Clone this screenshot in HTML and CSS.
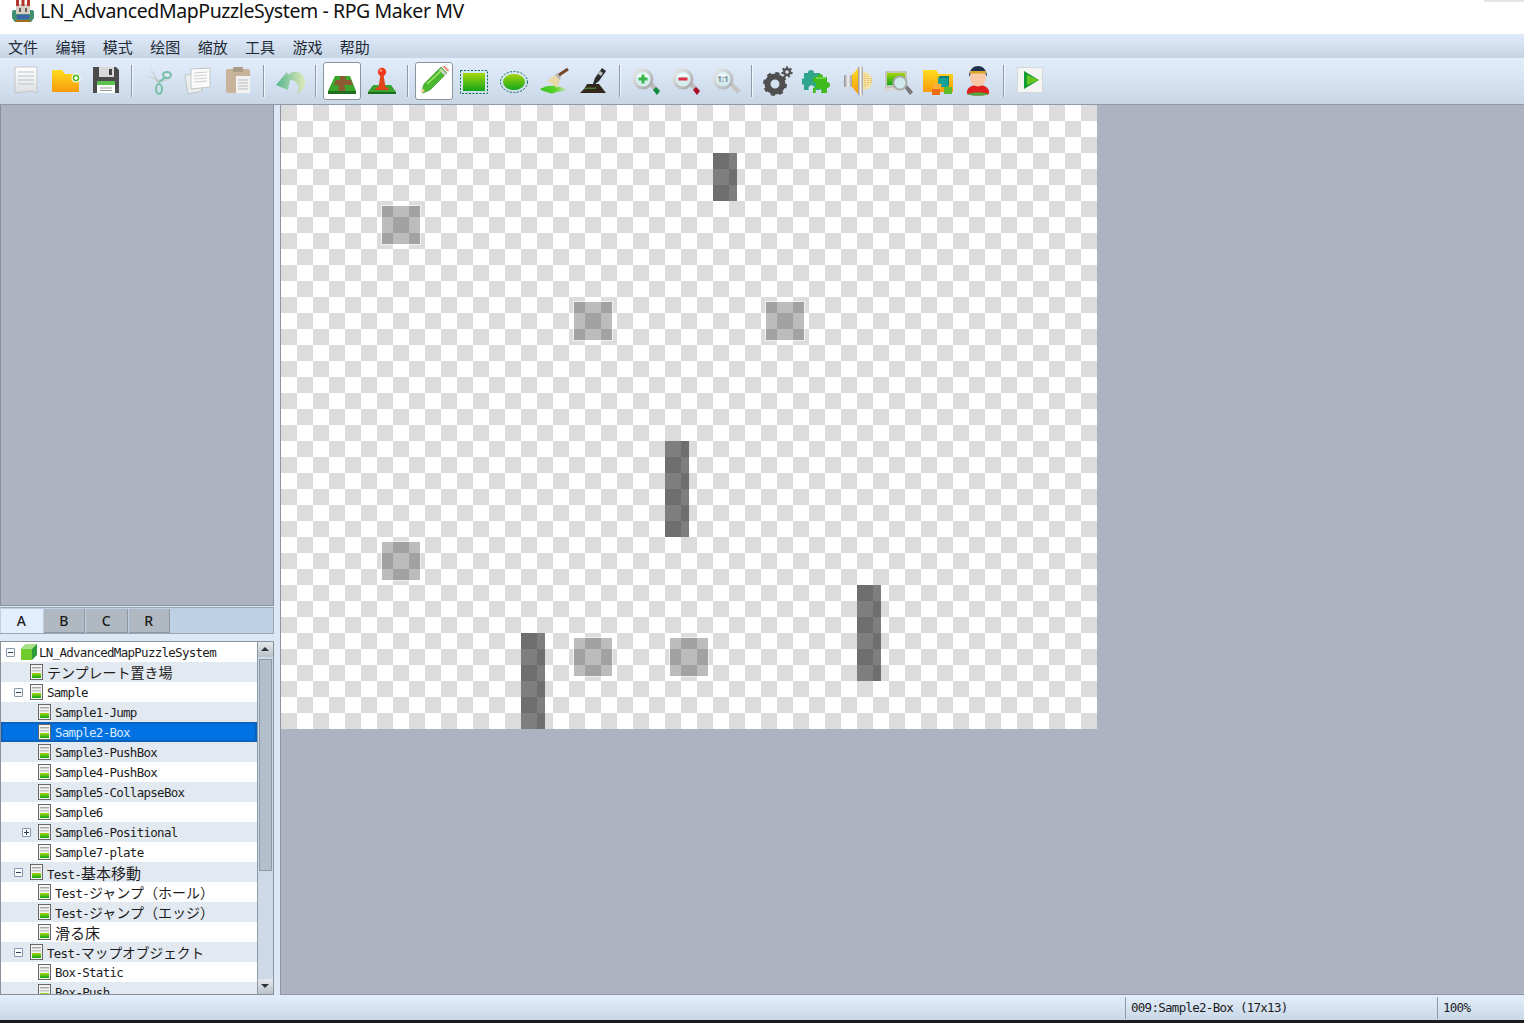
FILE: index.html
```html
<!DOCTYPE html>
<html lang="zh">
<head>
    <meta charset="UTF-8">
    <title>LN_AdvancedMapPuzzleSystem - RPG Maker MV</title>
    <link rel="stylesheet" href="styles.css">
</head>
<body>
    <svg class="defs" width="0" height="0">
        <defs>
            <linearGradient id="g-green" x1="0" y1="0" x2="0" y2="1"><stop offset="0" stop-color="#a6d60a"/><stop offset="1" stop-color="#11a61c"/></linearGradient>
            <linearGradient id="g-yellow" x1="0" y1="0" x2="0" y2="1"><stop offset="0" stop-color="#ffdc1e"/><stop offset="1" stop-color="#f79a0c"/></linearGradient>
            <linearGradient id="g-paper" x1="0" y1="0" x2="0" y2="1"><stop offset="0" stop-color="#ffffff"/><stop offset="1" stop-color="#dcdfe2"/></linearGradient>
            <linearGradient id="g-undo" x1="0" y1="0" x2="1" y2="0"><stop offset="0" stop-color="#55b58e"/><stop offset="1" stop-color="#dfe8b8"/></linearGradient>
            <linearGradient id="g-pool" x1="0" y1="0" x2="1" y2="0"><stop offset="0" stop-color="#35c11f"/><stop offset=".6" stop-color="#5fd42c"/><stop offset="1" stop-color="#d5e4d2"/></linearGradient>
            <linearGradient id="g-ring" x1="0" y1="0" x2="1" y2="1"><stop offset="0" stop-color="#eeeeee"/><stop offset="1" stop-color="#a2a2a2"/></linearGradient>
            <linearGradient id="g-silver" x1="0" y1="0" x2="1" y2="0"><stop offset="0" stop-color="#8d8d8d"/><stop offset=".5" stop-color="#f2f2f2"/><stop offset="1" stop-color="#9c9c9c"/></linearGradient>
            <symbol id="page" viewBox="0 0 13 16">
                <rect x=".5" y=".5" width="12" height="15" fill="#f4f4f4" stroke="#666"/>
                <rect x="2" y="3" width="9" height="1.5" fill="#a9a9a9"/>
                <rect x="2" y="6" width="9" height="1.5" fill="#c4c4c4"/>
                <rect x="2" y="9" width="9" height="5" fill="url(#g-green)"/>
            </symbol>
            <symbol id="lens" viewBox="0 0 32 32">
                <circle cx="13" cy="14" r="10.500" fill="url(#g-ring)"/>
                <circle cx="13" cy="14" r="7.500" fill="#d6eef0"/>
                <path d="M6.500 13a7 7 0 0 1 13 0c-3-2-10-2-13 0z" fill="#f8ffff"/>
            </symbol>
        </defs>
    </svg>

    <header class="titlebar">
        <svg class="app-icon" viewBox="0 0 22 22">
            <path d="M0 12q0-2 2-2h18q2 0 2 2v6l-3 4H3l-3-4z" fill="#3d9070"/>
            <rect x="4" y="4" width="14" height="10" fill="#d8cfc4"/>
            <path d="M4 0h3v6H4zM9.500 0h3v6h-3zM15 0h3v6h-3z" fill="#b5362c"/>
            <rect x="7" y="8" width="2" height="4" fill="#705a55"/>
            <rect x="13" y="8" width="2" height="4" fill="#705a55"/>
            <rect x="5" y="15" width="12" height="4" fill="#3f62b0"/>
            <path d="M3 20h16l-1 2H4z" fill="#a66a22"/>
        </svg>
        <span class="app-title">LN_AdvancedMapPuzzleSystem - RPG Maker MV</span>
        <span class="title-shadow"></span>
    </header>

    <nav class="menubar">
        <span>文件</span><span>编辑</span><span>模式</span><span>绘图</span><span>缩放</span><span>工具</span><span>游戏</span><span>帮助</span>
    </nav>

    <div class="toolbar">
        <button class="tool">
            <svg viewBox="0 0 32 32"><path d="M5 2h22v26l-5-2-17 2z" fill="url(#g-paper)" stroke="#c4c4c4"/><path d="M8 7h16M8 11h16M8 15h16M8 19h16" stroke="#bfc2c4"/></svg>
        </button>
        <button class="tool">
            <svg viewBox="0 0 32 32"><path d="M2 6q0-1 1-1h9l3 4h14v18H3q-1 0-1-1z" fill="url(#g-yellow)"/><circle cx="26" cy="13" r="4.500" fill="#fff"/><circle cx="26" cy="13" r="3.400" fill="#57b92c"/><path d="M24 13h4M26 11v4" stroke="#fff" stroke-width="1.400"/></svg>
        </button>
        <button class="tool">
            <svg viewBox="0 0 32 32"><path d="M3 2h23l3 3v23H3z" fill="#4b4b4b"/><rect x="9" y="2" width="15" height="10" fill="#d9d9d9"/><rect x="19" y="4" width="3" height="6" fill="#444"/><rect x="7" y="16" width="18" height="12" fill="#fff"/><rect x="7" y="16" width="18" height="4" fill="#5cc04e"/><path d="M10 23h12M10 25.500h12" stroke="#999"/></svg>
        </button>
        <i class="tool-sep"></i>
        <button class="tool">
            <svg viewBox="0 0 32 32"><path d="M3 10l15 5 11-1-9 3-2 0zM8 2l8 13 2 4-3-1z" fill="#c8cccc"/><ellipse cx="25" cy="10" rx="4" ry="3" fill="none" stroke="#76bfa6" stroke-width="2"/><ellipse cx="17" cy="24" rx="3" ry="5" fill="none" stroke="#76bfa6" stroke-width="2"/><path d="M17 17l7-5" stroke="#76bfa6" stroke-width="2"/></svg>
        </button>
        <button class="tool">
            <svg viewBox="0 0 32 32"><path d="M3 10l14-2 3 18-14 3z" fill="#eceeee" stroke="#c2c6c6"/><path d="M9 4l19-1v19l-19 2z" fill="#fbfbfb" stroke="#c2c6c6"/><path d="M12 8l13-1M12 11l13-1M12 14l13-1M12 17l13-1" stroke="#ccd0d0"/></svg>
        </button>
        <button class="tool">
            <svg viewBox="0 0 32 32"><rect x="4" y="4" width="24" height="24" rx="2" fill="#c9b39b"/><rect x="11" y="2" width="10" height="5" rx="1" fill="#aa9a88"/><path d="M14 11h14v17H14z" fill="#f2f2f2"/><path d="M16 15h10M16 18h10M16 21h10M16 24h10" stroke="#b9bcbc"/></svg>
        </button>
        <i class="tool-sep"></i>
        <button class="tool">
            <svg viewBox="0 0 32 32"><path d="M2 20L13 7l1 3c7-7 17-2 17 8 0 5-4 9-8 11 4-8 0-14-7-14l-2 10z" fill="url(#g-undo)"/></svg>
        </button>
        <i class="tool-sep"></i>
        <button class="tool active">
            <svg viewBox="0 0 32 32"><path d="M9 11h15l6 15H2z" fill="#3ca62c"/><path d="M2 26h28v3H2z" fill="#1f6f1e"/><path d="M14 11h5l1 4h5l2 5h-9l2 6h-8l1-6H8l2-5h4z" fill="#8b5b32"/></svg>
        </button>
        <button class="tool">
            <svg viewBox="0 0 32 32"><path d="M7 20h18l5 7H2z" fill="#38a32e"/><path d="M2 27h28v2H2z" fill="#1e6c1e"/><path d="M14.500 10h3l2 12 3 1v2H9.500v-2l3-1z" fill="#e0451a"/><circle cx="16" cy="7" r="4.200" fill="#ee3a1c"/><circle cx="14.800" cy="5.600" r="1.300" fill="#ff9a80"/></svg>
        </button>
        <i class="tool-sep"></i>
        <button class="tool active">
            <svg viewBox="0 0 32 32"><path d="M4 25l2-6L23 2l6 6L12 25l-7 3z" fill="#49b92e" stroke="#2c8c1f" stroke-width=".6"/><path d="M24 1l6 6 1-2-4-4z" fill="#e58f83"/><path d="M23 3l6 6-2 2-6-6z" fill="#cfcfcf"/><path d="M4 23l3 3-4 2z" fill="#f0cf9b"/><path d="M9 19L24 5" stroke="#a9e66c" stroke-width="1.500"/></svg>
        </button>
        <button class="tool">
            <svg viewBox="0 0 32 32"><rect x="2.500" y="5.500" width="27" height="23" fill="none" stroke="#0b6d4c" stroke-dasharray="2 1.500"/><rect x="5" y="8" width="22" height="18" fill="url(#g-green)"/></svg>
        </button>
        <button class="tool">
            <svg viewBox="0 0 32 32"><ellipse cx="16" cy="17" rx="13.500" ry="10.500" fill="none" stroke="#0b6d4c" stroke-dasharray="2 1.500"/><ellipse cx="16" cy="17" rx="11" ry="8" fill="url(#g-green)"/></svg>
        </button>
        <button class="tool">
            <svg viewBox="0 0 32 32"><path d="M2 24c5-3 10-4 16-3 4 1 9 2 11 4-5 2-10 1-13 3-3 1-5 0-7-1-3-1-5-1-7-3z" fill="url(#g-pool)"/><path d="M9 16l8-6 5 5-3 8c-3-3-6-5-10-7z" fill="#e9d9a5"/><path d="M17 10l3-2 3 3-1 4z" fill="#b4b4b4"/><path d="M21 10L30 4" stroke="#754526" stroke-width="3"/></svg>
        </button>
        <button class="tool">
            <svg viewBox="0 0 32 32"><path d="M9 19h12l7 9H2c3-3 5-5 7-9z" fill="#33261a"/><path d="M6 24c4-2 8 0 12-1" stroke="#5d9a42" fill="none"/><path d="M15 19l2-6 7-10 4 3-7 10-5 4z" fill="#2b2b2b"/><path d="M22 6l3 2-2 3-3-2z" fill="#bdbdbd"/></svg>
        </button>
        <i class="tool-sep"></i>
        <button class="tool">
            <svg viewBox="0 0 32 32"><path d="M19 20l3-3 8 8-4 3z" fill="#bbb"/><path d="M23 25l3-3 4 4-3 4z" fill="#0f8a3f"/><use href="#lens"/><path d="M8.500 14h9M13 9.500v9" stroke="#3bb54a" stroke-width="3"/></svg>
        </button>
        <button class="tool">
            <svg viewBox="0 0 32 32"><path d="M19 20l3-3 8 8-4 3z" fill="#bbb"/><path d="M23 25l3-3 4 4-3 4z" fill="#a80f26"/><use href="#lens"/><path d="M8.500 14h9" stroke="#d93344" stroke-width="3"/></svg>
        </button>
        <button class="tool">
            <svg viewBox="0 0 32 32"><path d="M19 20l3-3 9 9-4 3z" fill="#c6c6c6"/><use href="#lens" opacity=".8"/><text x="13" y="17" class="lens-label">1:1</text></svg>
        </button>
        <i class="tool-sep"></i>
        <button class="tool">
            <svg viewBox="0 0 32 32"><circle cx="13" cy="19" r="7.500" fill="none" stroke="#4f4f4f" stroke-width="6"/><circle cx="13" cy="19" r="10.500" fill="none" stroke="#4f4f4f" stroke-width="3" stroke-dasharray="4 4.250"/><circle cx="25" cy="7" r="3" fill="none" stroke="#555" stroke-width="2.500"/><circle cx="25" cy="7" r="4.800" fill="none" stroke="#555" stroke-width="1.800" stroke-dasharray="2.100 2.100"/></svg>
        </button>
        <button class="tool">
            <svg viewBox="0 0 32 32"><path d="M2 8h4a3 3 0 1 1 6 0h6v6a3 3 0 1 1 0 5v6h-6a3 3 0 1 0-5 0H2v-6a3 3 0 1 1 0-5z" fill="#2fa58e"/><path d="M11 12h4a3 3 0 1 1 6 0h4v5a3 3 0 1 1 0 6v5h-6a3 3 0 1 0-5 0h-3v-5a3 3 0 1 0 0-6z" fill="#3fba1c"/><path d="M14 13h10" stroke="#a6e66e"/></svg>
        </button>
        <button class="tool">
            <svg viewBox="0 0 32 32"><rect x="2" y="10" width="8" height="12" rx="1" fill="url(#g-silver)"/><path d="M10 10l7-8v28l-7-8z" fill="url(#g-yellow)"/><rect x="16" y="1" width="5" height="30" rx="2.500" fill="url(#g-silver)"/><path d="M21 7c6 0 9 4 9 9s-3 9-9 9z" fill="#f4e2a6"/><path d="M23 9v14M26 11v10M29 13v6" stroke="#d9a83c" stroke-dasharray="1 1"/></svg>
        </button>
        <button class="tool">
            <svg viewBox="0 0 32 32"><rect x="3" y="6" width="22" height="17" fill="#c6c6b8"/><rect x="5" y="8" width="18" height="12" fill="url(#g-green)"/><rect x="2" y="23" width="20" height="3" fill="#d8d8d8"/><path d="M22 22l3-2 6 7-3 3z" fill="#777"/><circle cx="18" cy="18" r="6.500" fill="#cfeaea" stroke="#a9acac" stroke-width="2"/></svg>
        </button>
        <button class="tool">
            <svg viewBox="0 0 32 32"><path d="M1 5h13l3 4h14v18H1z" fill="url(#g-yellow)"/><path d="M16 13h10v9H16z" fill="#12a197"/><path d="M16 13l2-2h9v9l-1 2v-9z" fill="#0c7d75"/><path d="M10 24h8v6h-8z" fill="#f26d14"/><path d="M12 19h8l-2 5h-8z" fill="#ffad3c"/><path d="M22 22h8v7h-8z" fill="#5cbc2c"/></svg>
        </button>
        <button class="tool">
            <svg viewBox="0 0 32 32"><path d="M5 29c-1-6 4-9 11-9s12 3 11 9c-6 2-16 2-22 0z" fill="#e21f1f"/><path d="M5 29c7-2 15-2 22 0-6 2-16 2-22 0z" fill="#49ad3c"/><ellipse cx="16" cy="13" rx="8" ry="8.500" fill="#f9c9a8"/><path d="M7 12C7 4 12 1 16 1s9 3 9 11l-2-4H9z" fill="#203050"/><rect x="8" y="6" width="16" height="2.500" fill="#d9a62a"/></svg>
        </button>
        <i class="tool-sep"></i>
        <button class="tool">
            <svg viewBox="0 0 32 32"><rect x="3.500" y="2.500" width="25" height="25" fill="#f4f5f3" stroke="#d5d8d8"/><path d="M10 6l15 9-15 9z" fill="#149a33"/><path d="M13 10l12 5-12 5z" fill="#63c71f"/></svg>
        </button>
    </div>

    <main class="workspace">
        <aside class="sidebar">
            <div class="tileset"></div>
            <div class="tabs">
                <span class="tab on">A</span><span class="tab">B</span><span class="tab">C</span><span class="tab">R</span>
            </div>
            <div class="tree-box">
                <ul class="tree">
                    <li class="lv0"><i class="toggle minus"></i>
                        <svg class="cube" viewBox="0 0 16 16"><path d="M5 0h11v11l-5 5H0V5z" fill="#2f9b3a"/><path d="M0 5h11v11H0z" fill="#6fcb2c"/><path d="M0 5l5-5h11l-5 5z" fill="#a9e08a"/></svg>
                        <span>LN_AdvancedMapPuzzleSystem</span></li>
                    <li class="lv1"><i class="toggle none"></i><svg class="page"><use href="#page"/></svg><span class="jp">テンプレート置き場</span></li>
                    <li class="lv1"><i class="toggle minus"></i><svg class="page"><use href="#page"/></svg><span>Sample</span></li>
                    <li class="lv2"><i class="toggle none"></i><svg class="page"><use href="#page"/></svg><span>Sample1-Jump</span></li>
                    <li class="lv2 selected"><i class="toggle none"></i><svg class="page"><use href="#page"/></svg><span>Sample2-Box</span></li>
                    <li class="lv2"><i class="toggle none"></i><svg class="page"><use href="#page"/></svg><span>Sample3-PushBox</span></li>
                    <li class="lv2"><i class="toggle none"></i><svg class="page"><use href="#page"/></svg><span>Sample4-PushBox</span></li>
                    <li class="lv2"><i class="toggle none"></i><svg class="page"><use href="#page"/></svg><span>Sample5-CollapseBox</span></li>
                    <li class="lv2"><i class="toggle none"></i><svg class="page"><use href="#page"/></svg><span>Sample6</span></li>
                    <li class="lv2"><i class="toggle plus"></i><svg class="page"><use href="#page"/></svg><span>Sample6-Positional</span></li>
                    <li class="lv2"><i class="toggle none"></i><svg class="page"><use href="#page"/></svg><span>Sample7-plate</span></li>
                    <li class="lv1"><i class="toggle minus"></i><svg class="page"><use href="#page"/></svg><span>Test-<b class="jp wide">基本移動</b></span></li>
                    <li class="lv2"><i class="toggle none"></i><svg class="page"><use href="#page"/></svg><span>Test-<b class="jp">ジャンプ（ホール）</b></span></li>
                    <li class="lv2"><i class="toggle none"></i><svg class="page"><use href="#page"/></svg><span>Test-<b class="jp">ジャンプ（エッジ）</b></span></li>
                    <li class="lv2"><i class="toggle none"></i><svg class="page"><use href="#page"/></svg><span class="jp wide">滑る床</span></li>
                    <li class="lv1"><i class="toggle minus"></i><svg class="page"><use href="#page"/></svg><span>Test-<b class="jp narrow">マップオブジェクト</b></span></li>
                    <li class="lv2"><i class="toggle none"></i><svg class="page"><use href="#page"/></svg><span>Box-Static</span></li>
                    <li class="lv2"><i class="toggle none"></i><svg class="page"><use href="#page"/></svg><span>Box-Push</span></li>
                </ul>
                <div class="scrollbar">
                    <span class="scroll-btn up"></span>
                    <div class="scroll-track"><div class="scroll-thumb"></div></div>
                    <span class="scroll-btn down"></span>
                </div>
            </div>
        </aside>

        <section class="map-area">
            <div class="map">
                <i class="wall w1"></i><i class="wall w2"></i><i class="wall w3"></i><i class="wall w4"></i>
                <i class="box b1"></i><i class="box b2"></i><i class="box b3"></i>
                <i class="box round b4"></i><i class="box round b5"></i><i class="box round b6"></i>
            </div>
        </section>
    </main>

    <footer class="statusbar">
        <span class="status-map">009:Sample2-Box (17x13)</span>
        <span class="status-zoom">100%</span>
    </footer>
    <div class="taskbar-edge"></div>
</body>
</html>
```

FILE: styles.css
```css
html, body {
    height: 100%;
}
body {
    margin: 0;
    height: 1023px;
    overflow: hidden;
    display: flex;
    flex-direction: column;
    background-color: #dde8f6;
    font-family: "Noto Sans", sans-serif;
    color: #222;
}
.defs {
    position: absolute;
}

/* title */
.titlebar {
    height: 34px;
    flex: none;
    display: flex;
    align-items: flex-start;
    padding-left: 12px;
    background-color: #fff;
    position: relative;
}
.app-icon {
    width: 22px;
    height: 22px;
}
.app-title {
    margin-left: 6px;
    font-family: "Noto Sans", sans-serif;
    font-size: 19.5px;
    letter-spacing: -0.41px;
    line-height: 22px;
    color: #111;
}
.title-shadow {
    position: absolute;
    right: 0;
    top: 0;
    width: 40px;
    height: 2px;
    background-color: #e4e4e4;
}

/* menu */
.menubar {
    height: 24px;
    flex: none;
    display: flex;
    gap: 17.4px;
    padding-left: 8px;
    background: linear-gradient(#e0ebfb, #c6d4e3);
    font-family: "Noto Sans CJK SC", sans-serif;
    font-size: 15px;
    line-height: 25px;
    color: #1f2a36;
}

/* toolbar */
.toolbar {
    height: 47px;
    flex: none;
    display: flex;
    align-items: flex-start;
    padding: 4px 0 0 6px;
    box-sizing: border-box;
    background: linear-gradient(#e3eefc, #c8d6e6);
    border-bottom: 1px solid #8f9aa6;
}
.tool {
    width: 40px;
    height: 38px;
    padding: 0;
    border: none;
    background: none;
    display: flex;
    align-items: center;
    justify-content: center;
    position: relative;
}
.tool svg {
    width: 32px;
    height: 32px;
}
.tool.active {
    width: 38px;
    margin: 0 1px;
    background-color: #fff;
    border: 1px solid #8b949e;
    border-radius: 3px;
    box-sizing: border-box;
}
.tool-sep {
    width: 1px;
    height: 32px;
    margin: 3px 6px 0 5px;
    background-color: #8f9aa6;
    box-shadow: 1px 0 0 #f2f7fd;
}
.lens-label {
    font-family: "Noto Sans", sans-serif;
    font-size: 8px;
    font-weight: 700;
    text-anchor: middle;
    fill: #7f8a8c;
}

/* main */
.workspace {
    flex: 1;
    min-height: 0;
    display: flex;
}
.sidebar {
    width: 274px;
    flex: none;
    display: flex;
    flex-direction: column;
}
.tileset {
    height: 501px;
    flex: none;
    box-sizing: border-box;
    background-color: #adb3bf;
    border: 1px solid #87909b;
    border-top: none;
}
.tabs {
    height: 27px;
    flex: none;
    margin-top: 1px;
    padding-top: 1px;
    box-sizing: border-box;
    display: flex;
    gap: 1px;
    padding-left: 1px;
    background-color: #bed0e6;
    border: 1px solid #9aa6b2;
    border-width: 1px 1px 1px 0;
}
.tab {
    width: 41.5px;
    height: 24px;
    box-sizing: border-box;
    text-align: center;
    font-size: 14px;
    font-weight: 500;
    line-height: 24px;
    color: #1a1a1a;
    background-color: #b0b8c1;
    border: 1px solid #8f979f;
    border-width: 0 1px 1px 0;
}
.tab.on {
    background-color: #e2eefb;
    border-color: #e2eefb;
}
.tree-box {
    height: 354px;
    flex: none;
    margin-top: 7px;
    box-sizing: border-box;
    display: flex;
    background-color: #fff;
    border: 1px solid #87909b;
    overflow: hidden;
}
.tree {
    flex: 1;
    min-width: 0;
    margin: 0;
    padding: 0;
    list-style: none;
    overflow: hidden;
    font-family: "DejaVu Sans Mono", monospace;
    font-size: 12.5px;
    letter-spacing: -0.72px;
    color: #1c1c1c;
}
.tree li {
    height: 20px;
    flex: none;
    display: flex;
    align-items: center;
    white-space: nowrap;
}
.tree li:nth-child(even) {
    background-color: #e3e9f0;
}
.tree li.selected {
    background-color: #0072e3;
    box-shadow: inset 0 0 0 2px #0a62bd;
    color: #d7eaff;
}
.lv0 {
    padding-left: 5px;
}
.lv1 {
    padding-left: 13px;
}
.lv2 {
    padding-left: 21px;
}
.jp {
    font-family: "Noto Sans CJK JP", sans-serif;
    font-size: 14px;
    font-weight: 400;
    letter-spacing: 0;
}
.jp.wide {
    font-size: 15px;
}
.jp.narrow {
    font-size: 13.7px;
}
.toggle {
    width: 9px;
    height: 9px;
    flex: none;
    box-sizing: border-box;
    margin-right: 7px;
    border: 1px solid #8496ad;
    border-radius: 1px;
    background-color: #fdfdfd;
    position: relative;
}
.toggle.none {
    border: none;
    background: none;
}
.toggle.minus::after, .toggle.plus::after {
    content: "";
    position: absolute;
    left: 1px;
    top: 3px;
    width: 5px;
    height: 1px;
    background-color: #2f3f5c;
}
.toggle.plus::before {
    content: "";
    position: absolute;
    left: 3px;
    top: 1px;
    width: 1px;
    height: 5px;
    background-color: #2f3f5c;
}
.page {
    width: 13px;
    height: 16px;
    flex: none;
    margin-right: 4px;
}
.cube {
    width: 16px;
    height: 16px;
    flex: none;
    margin-left: -1px;
    margin-right: 2px;
}

/* scrollbar */
.scrollbar {
    width: 15px;
    flex: none;
    display: flex;
    flex-direction: column;
    background-color: #cdd9e6;
    border-left: 1px solid #8b9aa7;
}
.scroll-btn {
    height: 15px;
    flex: none;
    background: linear-gradient(#e6e9ec, #b9c1c9);
    position: relative;
}
.scroll-btn::after {
    content: "";
    position: absolute;
    left: 3px;
    top: 5px;
    border: 4px solid transparent;
    border-top: none;
    border-bottom: 4px solid #2d3338;
}
.scroll-btn.down::after {
    border-bottom: none;
    border-top: 4px solid #2d3338;
}
.scroll-track {
    flex: 1;
    padding: 2px 1px 0;
}
.scroll-thumb {
    height: 212px;
    box-sizing: border-box;
    background-color: #b3bfca;
    border: 1px solid #8b9aa7;
}

/* map */
.map-area {
    flex: 1;
    min-width: 0;
    margin-left: 6px;
    background-color: #adb3c0;
    border-left: 1px solid #8d95a0;
    border-bottom: 1px solid #8d95a0;
}
.map {
    width: 816px;
    height: 624px;
    display: grid;
    grid-template-columns: repeat(17, 48px);
    grid-template-rows: repeat(13, 48px);
    background-color: #fff;
    background-image: conic-gradient(#fff 25%, #dcdcdc 0 50%, #fff 0 75%, #dcdcdc 0);
    background-size: 32px 32px;
}
.wall {
    width: 24px;
    background-color: rgba(0, 0, 0, 0.5);
}
.w1 { grid-column: 10; grid-row: 2; }
.w2 { grid-column: 9; grid-row: 8 / span 2; }
.w3 { grid-column: 6; grid-row: 12 / span 2; }
.w4 { grid-column: 13; grid-row: 11 / span 2; }
.box {
    width: 38px;
    height: 38px;
    place-self: center;
    background-color: rgba(0, 0, 0, 0.263);
    box-shadow: 0 0 0 1px rgba(255, 255, 255, 0.6);
    position: relative;
}
.box.round {
    box-shadow: none;
}
.box.round::before, .box.round::after {
    content: "";
    position: absolute;
    border: 0 solid rgba(255, 255, 255, 0.55);
}
.box.round::before {
    inset: -1px 11px;
    border-width: 1px 0;
}
.box.round::after {
    inset: 11px -1px;
    border-width: 0 1px;
}
.b1 { grid-column: 3; grid-row: 3; }
.b2 { grid-column: 7; grid-row: 5; }
.b3 { grid-column: 11; grid-row: 5; }
.b4 { grid-column: 3; grid-row: 10; }
.b5 { grid-column: 7; grid-row: 12; }
.b6 { grid-column: 9; grid-row: 12; }

/* status */
.statusbar {
    height: 25px;
    flex: none;
    box-sizing: border-box;
    display: flex;
    align-items: center;
    padding-left: 1125px;
    background: linear-gradient(#e3eefc, #c9d7e6);
    font-family: "DejaVu Sans Mono", monospace;
    font-size: 12.5px;
    letter-spacing: -0.72px;
    color: #1c1c1c;
}
.status-map, .status-zoom {
    height: 22px;
    box-sizing: border-box;
    padding-left: 5px;
    line-height: 22px;
    border-left: 1px solid #8f9aa6;
}
.status-map {
    width: 312px;
}
.taskbar-edge {
    height: 3px;
    flex: none;
    background-color: #1c1c1c;
}
```
